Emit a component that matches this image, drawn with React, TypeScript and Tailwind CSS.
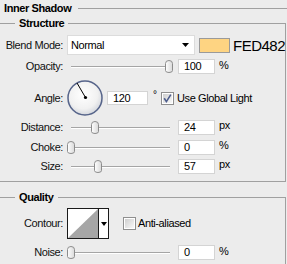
import type { ReactNode } from 'react';

function Thumb({ left }: { left: number }) {
  return (
    <svg className="absolute top-0" style={{ left }} width="8" height="13" viewBox="0 0 8 13">
      <defs>
        <linearGradient id="thumbFill" x1="0" y1="0" x2="1" y2="0">
          <stop offset="0" stopColor="#ffffff" />
          <stop offset="1" stopColor="#d9d9d9" />
        </linearGradient>
      </defs>
      <path d="M0.5 3.5 Q0.5 0.5 4 0.5 Q7.5 0.5 7.5 3.5 V10.5 Q7.5 12.5 4 12.5 Q0.5 12.5 0.5 10.5 Z" fill="url(#thumbFill)" stroke="#8c8c8c" />
    </svg>
  );
}

function Slider({ at }: { at: number }) {
  return (
    <div className="relative h-[13px] w-[106px]">
      <div className="absolute left-[4px] right-[3px] top-[6px] h-[2px] border-t border-[#a5a5a5] bg-white" />
      <Thumb left={at} />
    </div>
  );
}

function Field({ value, w = 'w-[37px]', h = 'h-[15px]' }: { value: string; w?: string; h?: string }) {
  return (
    <div className={`${w} ${h} flex items-center border border-[#d4d4d4] bg-white pl-[5px] text-[11px] text-black`}>
      {value}
    </div>
  );
}

function Label({ children }: { children: ReactNode }) {
  return <div className="w-[63px] shrink-0 text-right text-[11px] text-[#111]">{children}</div>;
}

function SliderRow({ label, at, value, unit, className }: { label: string; at: number; value: string; unit: string; className: string }) {
  return (
    <div className={`flex items-center ${className}`}>
      <Label>{label}</Label>
      <div className="ml-[4px]">
        <Slider at={at} />
      </div>
      <div className="ml-[5px]">
        <Field value={value} />
      </div>
      <span className="-mt-[3px] ml-[4px] text-[11px] text-black">{unit}</span>
    </div>
  );
}

function Dial() {
  return (
    <svg width="36" height="36" viewBox="0 0 36 36">
      <defs>
        <radialGradient id="dialFill" cx="0.45" cy="0.4" r="0.6">
          <stop offset="0" stopColor="#ffffff" />
          <stop offset="0.7" stopColor="#f1f1f1" />
          <stop offset="1" stopColor="#d5d8de" />
        </radialGradient>
      </defs>
      <circle cx="18" cy="18" r="17" fill="url(#dialFill)" stroke="#56648a" strokeWidth="1.5" />
      <line x1="18.5" y1="17.5" x2="10" y2="3" stroke="#000" strokeWidth="1" />
      <circle cx="18.5" cy="17.5" r="1.6" fill="#000" />
    </svg>
  );
}

function CheckBox({ checked }: { checked?: boolean }) {
  return (
    <svg width="13" height="13" viewBox="0 0 13 13">
      <defs>
        <linearGradient id="boxFill" x1="0" y1="0" x2="1" y2="1">
          <stop offset="0" stopColor="#cfcfcf" />
          <stop offset="1" stopColor="#f8f8f8" />
        </linearGradient>
      </defs>
      <rect x="0.5" y="0.5" width="12" height="12" fill="#fff" stroke="#8f8f8f" />
      <rect x="2" y="2" width="9" height="9" fill="url(#boxFill)" />
      {checked && <path d="M3.2 6.2 L5.4 9.6 L9.8 2.6" fill="none" stroke="#4d5d8c" strokeWidth="1.6" />}
    </svg>
  );
}

function Contour() {
  return (
    <div className="flex h-[31px] w-[42px] border border-[#1a1a1a] bg-white">
      <svg width="30" height="29" viewBox="0 0 30 29">
        <polygon points="0,29 30,0 30,29" fill="#a6a6a6" />
      </svg>
      <div className="flex flex-1 items-center justify-center border-l border-[#1a1a1a]">
        <svg width="6" height="4" viewBox="0 0 6 4">
          <polygon points="0,0 6,0 3,4" fill="#000" />
        </svg>
      </div>
    </div>
  );
}

export default function App() {
  return (
    <div className="h-[264px] w-[287px] overflow-hidden bg-[#ececec] font-['Liberation_Sans',Arial,sans-serif] tracking-[-0.4px] text-black">
      {/* header */}
      <div className="flex h-[16px] items-center pl-[4px]">
        <span className="text-[11px] font-bold">Inner Shadow</span>
        <div className="ml-[7px] h-px flex-1 bg-[#a0a0a0]" />
      </div>

      {/* Structure */}
      <fieldset className="-ml-[6px] mr-[1px] border border-[#a0a0a0] pb-[7px] pl-[5px]">
        <legend className="ml-[15px] px-[4px] text-[11px] font-bold leading-[14px]">Structure</legend>

        <div className="mt-[5px] flex h-[20px] items-center">
          <Label>Blend Mode:</Label>
          <div className="ml-[4px] flex h-[20px] w-[128px] items-center justify-between border border-[#dcdcdc] bg-white pl-[3px] pr-[5px] text-[11px]">
            <span>Normal</span>
            <svg width="7" height="4" viewBox="0 0 7 4">
              <polygon points="0,0 7,0 3.5,4" fill="#000" />
            </svg>
          </div>
          <div className="ml-[4px] h-[15px] w-[31px] border border-[#9a9a9a] bg-[#fed482]" />
          <span className="ml-[3px] text-[15px] leading-none tracking-[-0.5px]">FED482</span>
        </div>

        <SliderRow className="mt-[2px] h-[19px]" label="Opacity:" at={98} value="100" unit="%" />

        <div className="mt-[4px] flex h-[36px] items-center">
          <Label>Angle:</Label>
          <div className="ml-[4px]">
            <Dial />
          </div>
          <div className="ml-[4px]">
            <Field value="120" w="w-[41px]" h="h-[14px]" />
          </div>
          <span className="-mt-[8px] w-[13px] pl-[5px] text-[10px]">°</span>
          <CheckBox checked />
          <span className="ml-[3px] text-[11px]">Use Global Light</span>
        </div>

        <SliderRow className="mt-[3px] h-[16px]" label="Distance:" at={24} value="24" unit="px" />
        <SliderRow className="mt-[4px] h-[16px]" label="Choke:" at={0} value="0" unit="%" />
        <SliderRow className="mt-[3px] h-[16px]" label="Size:" at={27} value="57" unit="px" />
      </fieldset>

      {/* Quality */}
      <fieldset className="-ml-[6px] mr-[1px] mt-[8px] border border-[#a0a0a0] pb-[20px] pl-[5px]">
        <legend className="ml-[15px] px-[4px] text-[11px] font-bold leading-[14px]">Quality</legend>

        <div className="mt-[4px] flex h-[31px] items-center">
          <Label>Contour:</Label>
          <div className="ml-[4px]">
            <Contour />
          </div>
          <div className="ml-[14px]">
            <CheckBox />
          </div>
          <span className="ml-[2px] text-[11px]">Anti-aliased</span>
        </div>

        <SliderRow className="mt-[6px] h-[15px]" label="Noise:" at={0} value="0" unit="%" />
      </fieldset>
    </div>
  );
}
